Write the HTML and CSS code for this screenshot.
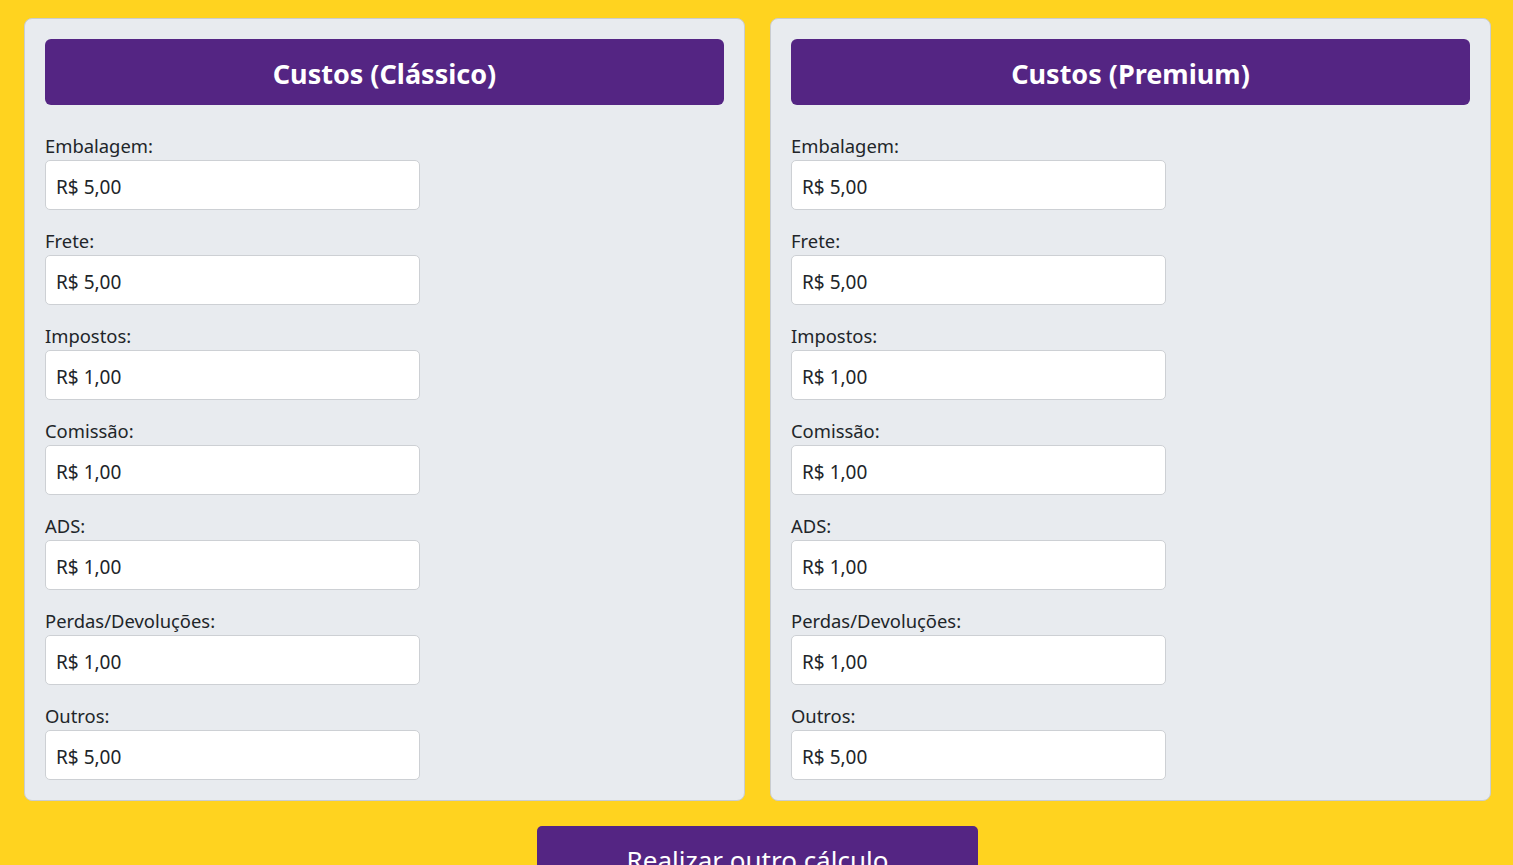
FILE: index.html
```html
<!DOCTYPE html>
<html lang="pt-BR">
<head>
<meta charset="utf-8">
<title>Custos</title>
<link rel="stylesheet" href="styles.css">
</head>
<body>
<main class="page">
  <div class="cards">
    <section class="card">
      <h2 class="card-title">Custos (Clássico)</h2>
      <div class="field"><label>Embalagem:</label><input class="input" type="text" value="R$ 5,00"></div>
      <div class="field"><label>Frete:</label><input class="input" type="text" value="R$ 5,00"></div>
      <div class="field"><label>Impostos:</label><input class="input" type="text" value="R$ 1,00"></div>
      <div class="field"><label>Comissão:</label><input class="input" type="text" value="R$ 1,00"></div>
      <div class="field"><label>ADS:</label><input class="input" type="text" value="R$ 1,00"></div>
      <div class="field"><label>Perdas/Devoluções:</label><input class="input" type="text" value="R$ 1,00"></div>
      <div class="field"><label>Outros:</label><input class="input" type="text" value="R$ 5,00"></div>
    </section>
    <section class="card">
      <h2 class="card-title">Custos (Premium)</h2>
      <div class="field"><label>Embalagem:</label><input class="input" type="text" value="R$ 5,00"></div>
      <div class="field"><label>Frete:</label><input class="input" type="text" value="R$ 5,00"></div>
      <div class="field"><label>Impostos:</label><input class="input" type="text" value="R$ 1,00"></div>
      <div class="field"><label>Comissão:</label><input class="input" type="text" value="R$ 1,00"></div>
      <div class="field"><label>ADS:</label><input class="input" type="text" value="R$ 1,00"></div>
      <div class="field"><label>Perdas/Devoluções:</label><input class="input" type="text" value="R$ 1,00"></div>
      <div class="field"><label>Outros:</label><input class="input" type="text" value="R$ 5,00"></div>
    </section>
  </div>
  <div class="actions">
    <button class="btn" type="button">Realizar outro cálculo</button>
  </div>
</main>
</body>
</html>
```

FILE: styles.css
```css
html, body {
  margin: 0;
  padding: 0;
  background: #ffd31f;
  font-family: "Noto Sans", "Open Sans", sans-serif;
  color: #212529;
  overflow: hidden;
  height: 865px;
}
.page {
  padding: 18px 22px 0 24px;
}
.cards {
  display: grid;
  grid-template-columns: 1fr 1fr;
  gap: 25px;
}
.card {
  background: #e8ebef;
  border: 1px solid #c9ccd0;
  border-radius: 8px;
  padding: 20px;
  display: flex;
  flex-direction: column;
}
.card-title {
  margin: 0 0 27px 0;
  height: 66px;
  background: #542583;
  border-radius: 6px;
  color: #fff;
  font-size: 27px;
  font-weight: 700;
  display: flex;
  align-items: center;
  justify-content: center;
  padding-top: 2px;
  box-sizing: border-box;
}
.field {
  display: flex;
  flex-direction: column;
  margin-bottom: 17px;
}
.field:last-child {
  margin-bottom: 0;
}
.field label {
  font-size: 18.4px;
  line-height: 28px;
  color: #212529;
}
.input {
  box-sizing: border-box;
  width: 375px;
  height: 50px;
  border: 1px solid #cdd0d4;
  border-radius: 5px;
  background: #fff;
  padding: 3px 10px 0 10px;
  font-family: inherit;
  font-size: 19px;
  color: #212529;
}
.actions {
  display: flex;
  justify-content: center;
  padding-top: 25px;
}
.btn {
  width: 441px;
  height: 60px;
  background: #542583;
  border: none;
  border-radius: 5px;
  color: #fff;
  font-family: inherit;
  font-size: 26px;
  padding: 16px 0 0 0;
  display: flex;
  justify-content: center;
  align-items: flex-start;
}
```
